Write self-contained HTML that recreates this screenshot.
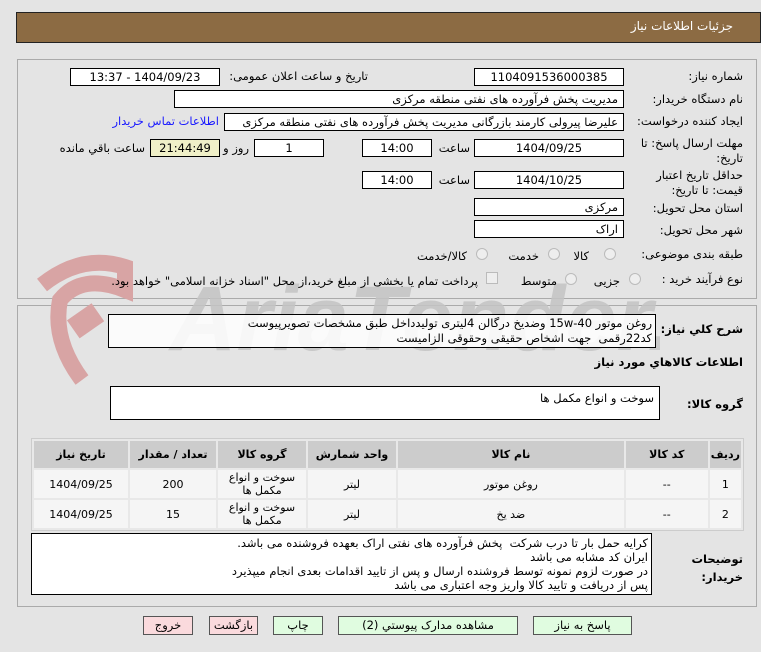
<!DOCTYPE html>
<html><head><meta charset="utf-8"><style>
body{margin:0;width:761px;height:652px;background:#e4e4e4;position:relative;overflow:hidden;font-family:"DejaVu Sans","Noto Sans CJK SC",sans-serif;font-size:11.5px;color:#000}
.a{position:absolute;white-space:nowrap}
.b{position:absolute;background:#fff;border:1px solid #000;box-sizing:border-box;direction:rtl;padding:0 5px;line-height:16px;white-space:nowrap}
.c{text-align:center;padding:0}
.l{position:absolute;direction:rtl;text-align:right;white-space:nowrap}
.r{position:absolute;width:12px;height:12px;border-radius:50%;border:1px solid #bbb;background:#eee;box-sizing:border-box}
table{position:absolute;border-collapse:separate;border-spacing:2px;background:#e8e8e8;border:1px solid #ccc;direction:rtl}
td{text-align:center;font-size:11px;padding:0}
th{background:#ccc;font-size:11px;height:25px}
td{background:#f5f5f5}
.btn{position:absolute;height:19px;border:1px solid #555;box-sizing:border-box;text-align:center;line-height:17px;font-size:11.5px}
</style></head><body>
<div class="a" style="left:16px;top:12px;width:745px;height:31px;background:#8c6b43;border:1px solid #222;box-sizing:border-box"></div>
<div class="l" style="right:28px;top:19px;color:#fff;font-size:12px">جزئیات اطلاعات نیاز</div>
<div class="a" style="left:17px;top:59px;width:740px;height:240px;border:1px solid #aaa;box-sizing:border-box"></div>
<div class="a" style="left:17px;top:305px;width:740px;height:302px;border:1px solid #aaa;box-sizing:border-box"></div>
<!-- watermark -->
<svg class="a" style="left:20px;top:245px" width="640" height="140">
<path d="M22 40 Q62 8 105 22 L105 45 Q62 28 40 55 Q32 95 62 135" fill="none" stroke="#d8a4a4" stroke-width="16"/>
<rect x="50" y="65" width="30" height="22" fill="#d8a4a4" transform="rotate(-35 65 75)"/>
<text x="150" y="105" font-size="92" font-family="Liberation Sans" font-weight="bold" font-style="italic" fill="#c4c4c4" opacity="0.85">AriaTender.net</text>
</svg>
<div class="l" style="right:18px;top:69px">شماره نیاز:</div>
<div class="b c" style="left:474px;top:68px;width:150px;height:18px">1104091536000385</div>
<div class="l" style="right:393px;top:69px">تاریخ و ساعت اعلان عمومی:</div>
<div class="b c" style="left:70px;top:68px;width:150px;height:18px">1404/09/23 - 13:37</div>
<div class="l" style="right:18px;top:92px">نام دستگاه خریدار:</div>
<div class="b" style="left:174px;top:90px;width:450px;height:18px">مدیریت پخش فرآورده های نفتی منطقه مرکزی</div>
<div class="l" style="right:18px;top:114px">ایجاد کننده درخواست:</div>
<div class="b" style="left:224px;top:113px;width:400px;height:18px">علیرضا پیرولی کارمند بازرگانی مدیریت پخش فرآورده های نفتی منطقه مرکزی</div>
<div class="l" style="right:542px;top:114px;color:#1a1aff">اطلاعات تماس خریدار</div>
<div class="l" style="right:18px;top:136px;line-height:15px">مهلت ارسال پاسخ: تا<br>تاریخ:</div>
<div class="b c" style="left:474px;top:139px;width:150px;height:18px">1404/09/25</div>
<div class="l" style="right:291px;top:141px">ساعت</div>
<div class="b c" style="left:362px;top:139px;width:70px;height:18px">14:00</div>
<div class="b c" style="left:254px;top:139px;width:70px;height:18px">1</div>
<div class="l" style="right:512px;top:141px">روز و</div>
<div class="b c" style="left:150px;top:139px;width:70px;height:18px;background:#f0f0c8">21:44:49</div>
<div class="l" style="right:616px;top:141px">ساعت باقي مانده</div>
<div class="l" style="right:18px;top:168px;line-height:15px">حداقل تاریخ اعتبار<br>قیمت: تا تاریخ:</div>
<div class="b c" style="left:474px;top:171px;width:150px;height:18px">1404/10/25</div>
<div class="l" style="right:291px;top:173px">ساعت</div>
<div class="b c" style="left:362px;top:171px;width:70px;height:18px">14:00</div>
<div class="l" style="right:18px;top:201px">استان محل تحویل:</div>
<div class="b" style="left:474px;top:198px;width:150px;height:18px">مرکزی</div>
<div class="l" style="right:18px;top:223px">شهر محل تحویل:</div>
<div class="b" style="left:474px;top:220px;width:150px;height:18px">اراک</div>
<div class="l" style="right:18px;top:247px">طبقه بندی موضوعی:</div>
<div class="r" style="left:604px;top:248px"></div><div class="l" style="right:172px;top:249px">کالا</div>
<div class="r" style="left:548px;top:248px"></div><div class="l" style="right:222px;top:249px">خدمت</div>
<div class="r" style="left:476px;top:248px"></div><div class="l" style="right:294px;top:249px">کالا/خدمت</div>
<div class="l" style="right:18px;top:272px">نوع فرآیند خرید :</div>
<div class="r" style="left:629px;top:273px"></div><div class="l" style="right:141px;top:274px">جزیی</div>
<div class="r" style="left:565px;top:273px"></div><div class="l" style="right:204px;top:274px">متوسط</div>
<div class="a" style="left:486px;top:272px;width:12px;height:12px;border:1px solid #bbb;background:#eee;box-sizing:border-box"></div>
<div class="l" style="right:283px;top:274px">پرداخت تمام یا بخشی از مبلغ خرید،از محل "اسناد خزانه اسلامی" خواهد بود.</div>
<div class="l" style="right:18px;top:322px;font-weight:bold">شرح كلي نياز:</div>
<div class="b" style="left:108px;top:314px;width:548px;height:34px;line-height:15px;padding:1px 3px;background:rgba(255,255,255,0.85)">روغن موتور 15w-40 وضدیخ درگالن 4لیتری تولیدداخل طبق مشخصات تصویرپیوست<br>کد22رقمی&nbsp; جهت اشخاص حقیقی وحقوقی الزامیست</div>
<div class="l" style="right:18px;top:355px;font-weight:bold">اطلاعات كالاهاي مورد نياز</div>
<div class="l" style="right:18px;top:397px;font-weight:bold">گروه کالا:</div>
<div class="b" style="left:110px;top:386px;width:550px;height:34px;padding:3px 5px">سوخت و انواع مکمل ها</div>
<table style="left:31px;top:438px;width:713px">
<tr><th style="width:26px">ردیف</th><th style="width:80px">کد کالا</th><th>نام کالا</th><th style="width:86px">واحد شمارش</th><th style="width:86px">گروه کالا</th><th style="width:84px">تعداد / مقدار</th><th style="width:92px">تاریخ نیاز</th></tr>
<tr style="height:28px"><td>1</td><td>--</td><td>روغن موتور</td><td>لیتر</td><td style="line-height:13px">سوخت و انواع<br>مکمل ها</td><td>200</td><td>1404/09/25</td></tr>
<tr style="height:28px"><td>2</td><td>--</td><td>ضد یخ</td><td>لیتر</td><td style="line-height:13px">سوخت و انواع<br>مکمل ها</td><td>15</td><td>1404/09/25</td></tr>
</table>
<div class="l" style="right:18px;top:550px;font-weight:bold;line-height:18px">توضیحات<br>خریدار:</div>
<div class="b" style="left:31px;top:533px;width:621px;height:62px;line-height:14px;padding:2px 3px">کرایه حمل بار تا درب شرکت&nbsp; پخش فرآورده های نفتی اراک بعهده فروشنده می باشد.<br>ایران کد مشابه می باشد<br>در صورت لزوم نمونه توسط فروشنده ارسال و پس از تایید اقدامات بعدی انجام میپذیرد<br>پس از دریافت و تایید کالا واریز وجه اعتباری می باشد</div>
<div class="btn" style="left:143px;top:616px;width:50px;background:#fadadd">خروج</div>
<div class="btn" style="left:209px;top:616px;width:49px;background:#fadadd">بازگشت</div>
<div class="btn" style="left:273px;top:616px;width:50px;background:#e0fce0">چاپ</div>
<div class="btn" style="left:338px;top:616px;width:180px;background:#e0fce0">مشاهده مدارک پیوستي (2)</div>
<div class="btn" style="left:533px;top:616px;width:99px;background:#e0fce0">پاسخ به نیاز</div>
</body></html>
